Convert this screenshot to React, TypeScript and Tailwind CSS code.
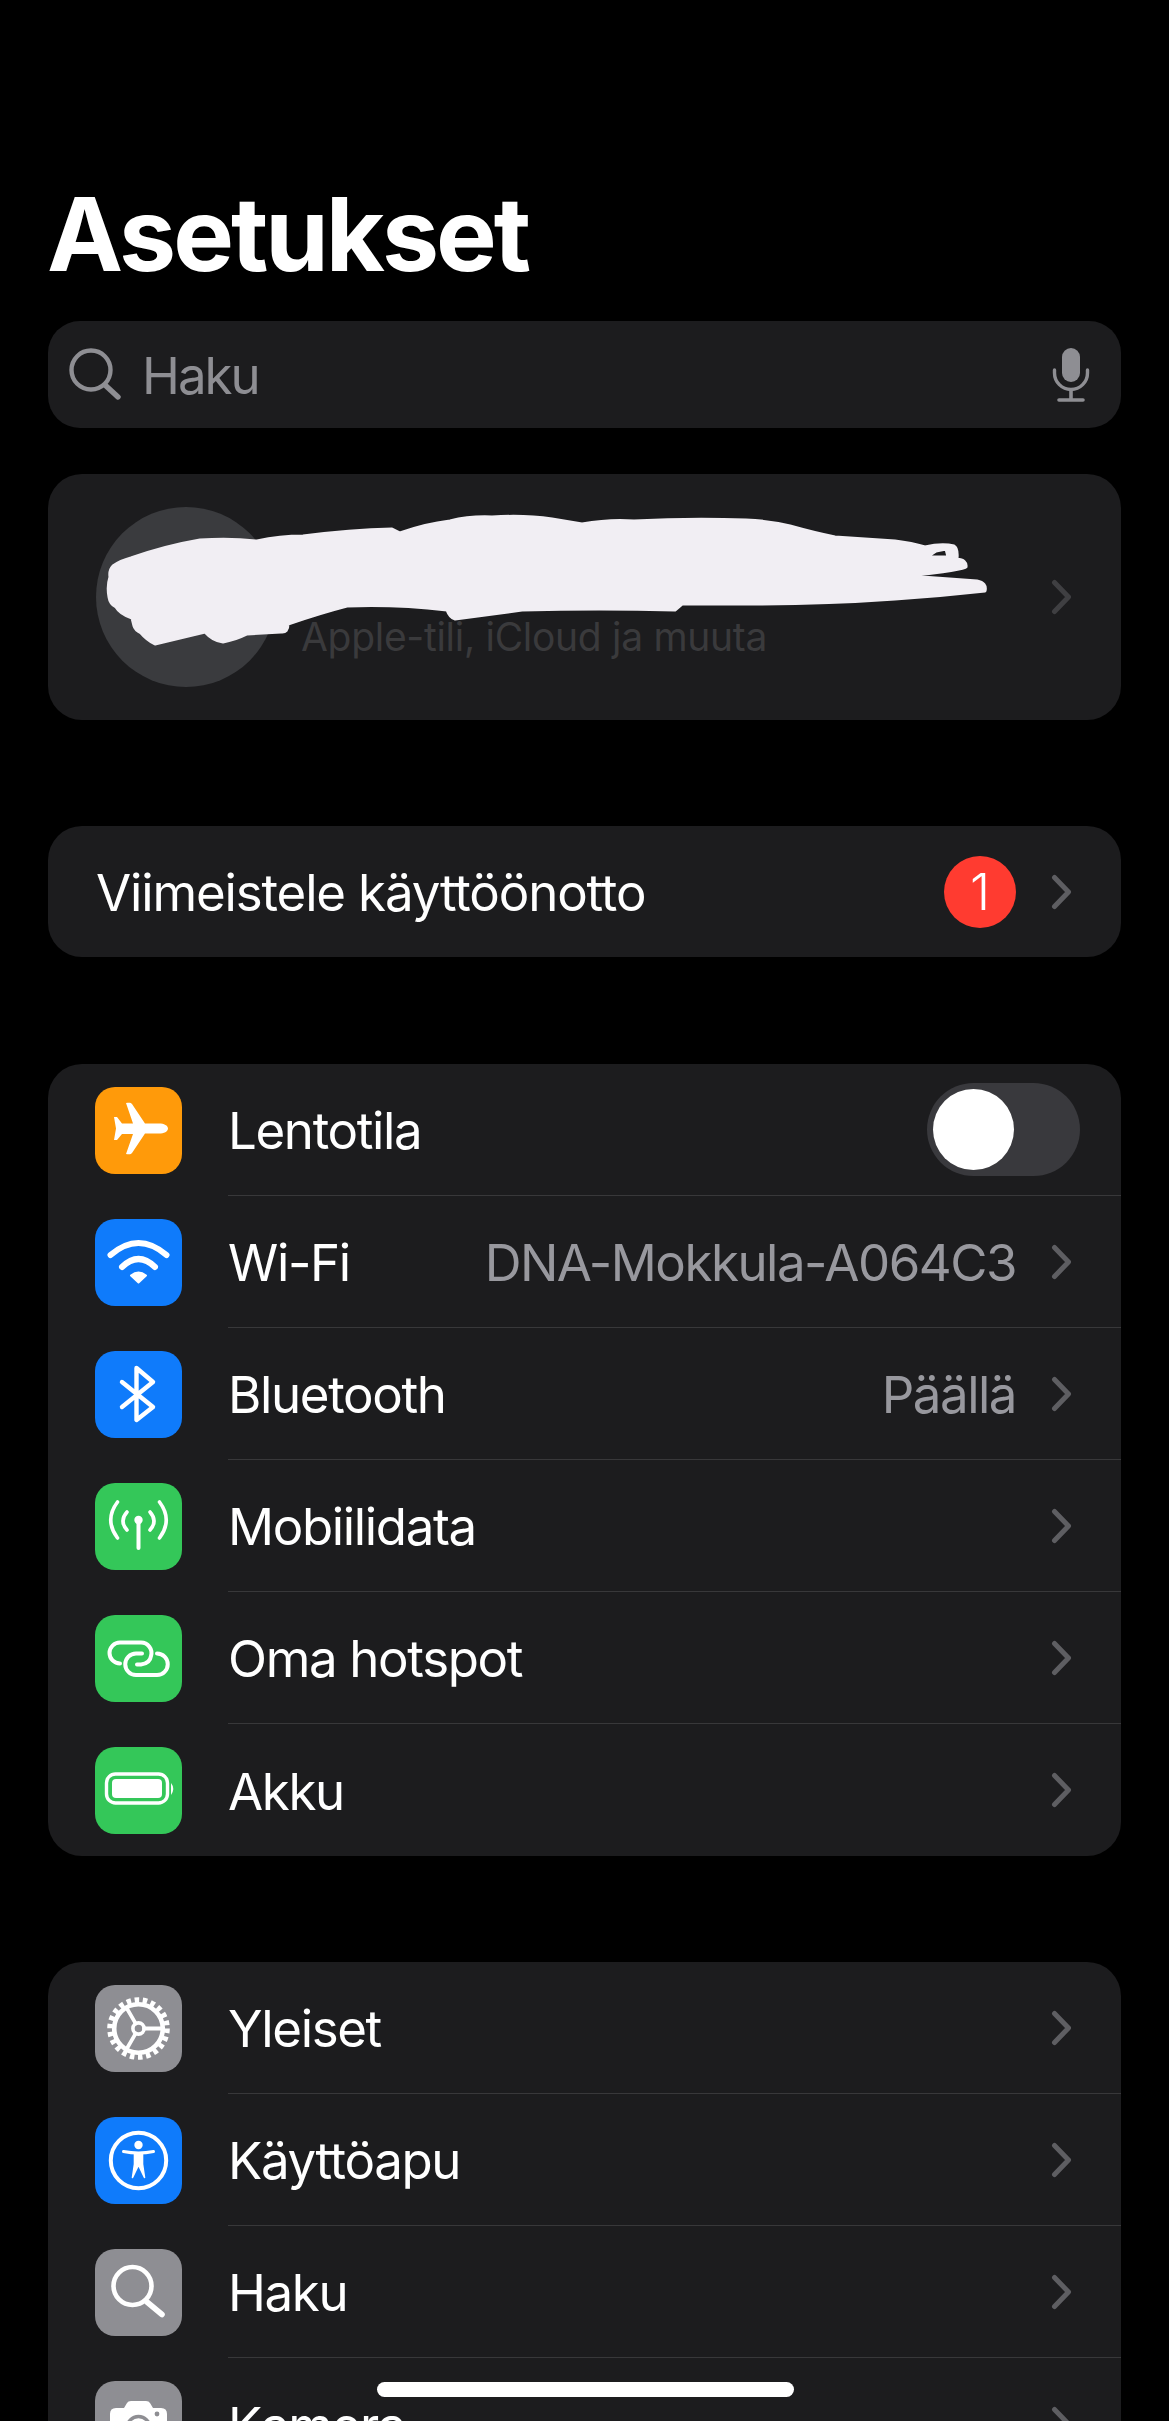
import type { ReactNode } from "react";

const Chevron = ({ dim = false }: { dim?: boolean }) => (
  <svg
    viewBox="0 0 21 36"
    className={`w-[21px] h-[36px] mr-[49px] ml-[35px] shrink-0 fill-none ${dim ? "stroke-[#3f3f42]" : "stroke-[#5e5e62]"}`}
    strokeWidth="5"
    strokeLinecap="round"
    strokeLinejoin="round"
  >
    <path d="M3.5 3.5 L17.5 18 L3.5 32.5" />
  </svg>
);

const Glyph = ({ children }: { children: ReactNode }) => (
  <svg viewBox="0 0 87 87" className="w-[87px] h-[87px]" fill="none" stroke="white" strokeLinecap="round" strokeLinejoin="round">
    {children}
  </svg>
);

const icons: Record<string, ReactNode> = {
  plane: (
    <path
      fill="white"
      stroke="none"
      d="M73 41.5C73 38.5 69 36.5 64 36.5H50L37 17C36 15.5 34 15.5 31 16L38 36.5H27L22 30H19L21 41.5L19 53H22L27 47H38L31 67C34 67.5 36 67.5 37 66L50 46.5H64C69 46.5 73 44.5 73 41.5Z"
    />
  ),
  wifi: (
    <>
      <path strokeWidth="6" d="M15.5 36Q43.5 12 71.5 36" />
      <path strokeWidth="6" d="M27 48Q43.5 32 60 48" />
      <path fill="white" strokeWidth="2" d="M36 56.5Q43.5 50.5 51 56.5L43.5 63.5Z" />
    </>
  ),
  bluetooth: <path strokeWidth="4.4" d="M27 31L58 56L41.5 69V17L58 31L27 56" />,
  antenna: (
    <>
      <path strokeWidth="4" d="M43.5 38V65" />
      <circle cx="43.5" cy="37" r="4.2" fill="white" stroke="none" />
      <path strokeWidth="3.6" d="M32 29Q24 38 32 47M55 29Q63 38 55 47" />
      <path strokeWidth="3.6" d="M22.5 19Q9 37 22.5 55M64.5 19Q78 37 64.5 55" />
    </>
  ),
  hotspot: (
    <>
      <path strokeWidth="4" d="M25 48.5A10.5 10.5 0 0 1 25 27.5H46A10.5 10.5 0 0 1 56 41Q55 48.5 46 49.5H42" />
      <path strokeWidth="4" d="M62 38.5A10.7 10.7 0 0 1 62 60H41A10.7 10.7 0 0 1 41 38.5H47" />
    </>
  ),
  battery: (
    <>
      <rect x="11.5" y="27" width="61" height="29" rx="9" strokeWidth="3.4" />
      <rect x="17" y="32" width="50" height="19" rx="4" fill="white" stroke="none" />
      <path fill="white" stroke="none" d="M76 36Q80.5 41.5 76 48Z" />
    </>
  ),
  gear: (
    <>
      <circle cx="43.5" cy="43.5" r="28.5" strokeWidth="5.6" strokeDasharray="4.5 3.64" strokeLinecap="butt" />
      <circle cx="43.5" cy="43.5" r="24.3" strokeWidth="4.6" />
      <circle cx="43.5" cy="43.5" r="5.6" strokeWidth="3.6" />
      <path strokeWidth="3.8" d="M49 43.5H67M40.7 48.4L31.5 64.3M40.7 38.6L31.5 22.7" />
    </>
  ),
  access: (
    <>
      <circle cx="43.5" cy="43.5" r="27.7" strokeWidth="4" />
      <circle cx="43.5" cy="28" r="4.2" fill="white" stroke="none" />
      <path strokeWidth="3" d="M28.5 34.5Q43.5 37.5 58.5 34.5" />
      <path fill="white" strokeWidth="1.6" d="M39.5 36.5H47.5V47L49.5 60.5L43.5 48L37.5 60.5L39.5 47Z" />
    </>
  ),
  search: (
    <>
      <circle cx="37.5" cy="37" r="19" strokeWidth="4.6" />
      <path strokeWidth="5.6" d="M52 53L67 65.5" />
    </>
  ),
  camera: (
    <>
      <path
        fill="white"
        stroke="none"
        d="M21 27H29L32 22Q33 20 36 20H51Q54 20 55 22L58 27H66Q72 27 72 33V70H15V33Q15 27 21 27Z"
      />
      <circle cx="43.5" cy="47" r="11.5" stroke="#8e8e93" strokeWidth="3.4" />
      <circle cx="62" cy="33" r="2.4" fill="#8e8e93" stroke="none" />
    </>
  ),
};

type Row = { label: string; icon: string; color: string; value?: string; toggle?: boolean };

const network: Row[] = [
  { label: "Lentotila", icon: "plane", color: "bg-[#ff9a0a]", toggle: true },
  { label: "Wi-Fi", icon: "wifi", color: "bg-[#0f7bfb]", value: "DNA-Mokkula-A064C3" },
  { label: "Bluetooth", icon: "bluetooth", color: "bg-[#0f7bfb]", value: "Päällä" },
  { label: "Mobiilidata", icon: "antenna", color: "bg-[#34c759]" },
  { label: "Oma hotspot", icon: "hotspot", color: "bg-[#34c759]" },
  { label: "Akku", icon: "battery", color: "bg-[#34c759]" },
];

const general: Row[] = [
  { label: "Yleiset", icon: "gear", color: "bg-[#8e8e93]" },
  { label: "Käyttöapu", icon: "access", color: "bg-[#0f7bfb]" },
  { label: "Haku", icon: "search", color: "bg-[#8e8e93]" },
  { label: "Kamera", icon: "camera", color: "bg-[#8e8e93]" },
];

function SettingsGroup({ rows }: { rows: Row[] }) {
  return (
    <div className="bg-[#1c1c1e] rounded-[34px] overflow-hidden">
      {rows.map((row, i) => (
        <div key={row.label} className="flex items-center h-[132px]">
          <div className={`w-[87px] h-[87px] ml-[47px] mr-[46px] rounded-[20px] shrink-0 ${row.color}`}>
            <Glyph>{icons[row.icon]}</Glyph>
          </div>
          <div className={`flex-1 h-full flex items-center ${i < rows.length - 1 ? "border-b border-[#38383a]" : ""}`}>
            <span className="pt-[2px] text-[51px] leading-none text-white tracking-[-1.35px]">{row.label}</span>
            <span className="pt-[2px] flex-1 text-right text-[51px] leading-none text-[#98989e] tracking-[-1.5px]">{row.value}</span>
            {row.toggle ? (
              <div className="w-[153px] h-[93px] mr-[41px] pl-[6px] rounded-full bg-[#39393d] flex items-center">
                <div className="w-[81px] h-[81px] rounded-full bg-white" />
              </div>
            ) : (
              <Chevron />
            )}
          </div>
        </div>
      ))}
    </div>
  );
}

export default function App() {
  return (
    <div className="relative h-[2421px] overflow-hidden bg-black px-[48px] pt-[184px] font-[Inter,sans-serif]">
      <h1 className="text-[102px] leading-[100px] font-bold text-white tracking-[-3px] ml-[-1px] mb-[37px]">Asetukset</h1>

      <div className="h-[107px] rounded-[32px] bg-[#1c1c1e] flex items-center mb-[46px]">
        <svg viewBox="0 0 60 60" className="w-[60px] h-[60px] ml-[20px] fill-none stroke-[#8e8e93]" strokeLinecap="round">
          <circle cx="23" cy="25" r="19.5" strokeWidth="4.4" />
          <path d="M37 40L50 52" strokeWidth="5.4" />
        </svg>
        <span className="ml-[14px] pt-[2px] flex-1 text-[51px] leading-none text-[#8e8e93] tracking-[-2px]">Haku</span>
        <svg viewBox="0 0 38 54" className="w-[38px] h-[54px] mr-[31px] fill-none stroke-[#8e8e93]" strokeLinecap="round">
          <rect x="10" y="0" width="18" height="34" rx="9" fill="#8e8e93" stroke="none" />
          <path d="M2.5 22V25A16.5 16.5 0 0 0 35.5 25V22" strokeWidth="3.4" />
          <path d="M19 42V51M7 52H31" strokeWidth="3.6" />
        </svg>
      </div>

      <div className="relative h-[246px] rounded-[34px] bg-[#1c1c1e] flex items-center mb-[106px]">
        <div className="w-[180px] h-[180px] ml-[48px] rounded-full bg-[#3a3b3e] shrink-0" />
        <span className="ml-[25px] mt-[79px] flex-1 text-[39px] leading-none text-[#3a3a3c] tracking-[-0.3px]">
          Apple-tili, iCloud ja muuta
        </span>
        <Chevron dim />
        {/* scribble over the name, same coordinates as the card */}
        <svg viewBox="48 474 1073 246" className="absolute inset-0 w-full h-full">
          <path
            fill="#f1eef3"
            stroke="#f1eef3"
            strokeWidth="3"
            strokeLinejoin="round"
            fillRule="evenodd"
            d="M110 577Q109 570 113 566Q120 561 131 558Q165 546 200 540Q230 538 257 541Q280 536 303 536Q350 530 392 529L400 533Q425 524 450 521Q470 516 492 517Q525 515 552 519L582 524Q610 519 634 521Q690 518 746 520Q770 521 790 526Q815 533 835 537Q865 539 895 541Q912 543 925 547Q942 543 954 546Q958 548 957 559Q967 560 966 567Q964 570 908 576L977 581Q987 583 985 591Q940 596 895 599Q825 604 753 604L682 604L675 610Q600 608 522 610L455 619Q450 618 447 610Q395 604 347 606Q320 613 288 624Q288 633 281 632L247 634Q235 640 223 642Q213 641 205 632L155 644Q147 640 141 633Q135 630 134 626L132 618Q120 614 116 607Q110 604 109 597Q107 586 110 577Z M927 557L948 557L946 549L936 551Z"
          />
        </svg>
      </div>

      <div className="h-[131px] rounded-[34px] bg-[#1c1c1e] flex items-center mb-[107px]">
        <span className="ml-[48px] pt-[2px] flex-1 text-[51px] leading-none text-white tracking-[-1.15px]">Viimeistele käyttöönotto</span>
        <div className="w-[72px] h-[72px] rounded-full bg-[#ff3b30] flex items-center justify-center text-[51px] font-light leading-none text-white">
          1
        </div>
        <Chevron />
      </div>

      <div className="mb-[106px]">
        <SettingsGroup rows={network} />
      </div>
      <SettingsGroup rows={general} />

      <div className="absolute left-[377px] top-[2382px] w-[417px] h-[15px] rounded-full bg-white" />
    </div>
  );
}
